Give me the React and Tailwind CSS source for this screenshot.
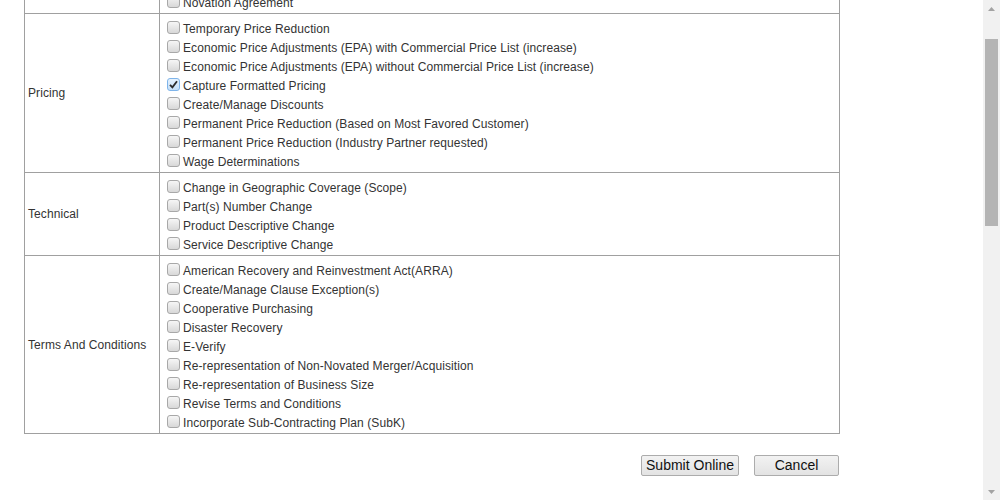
import React from "react";

const rows = [
  {
    label: "Administrative",
    items: [
      "Address Change",
      "Authorized Negotiator Change",
      "Contract Administrator Change",
      "Change of Ownership",
      "Name Change",
      "Mass Modification",
      "Novation Agreement",
    ],
  },
  {
    label: "Pricing",
    items: [
      "Temporary Price Reduction",
      "Economic Price Adjustments (EPA) with Commercial Price List (increase)",
      "Economic Price Adjustments (EPA) without Commercial Price List (increase)",
      "Capture Formatted Pricing",
      "Create/Manage Discounts",
      "Permanent Price Reduction (Based on Most Favored Customer)",
      "Permanent Price Reduction (Industry Partner requested)",
      "Wage Determinations",
    ],
    checked: "Capture Formatted Pricing",
  },
  {
    label: "Technical",
    items: [
      "Change in Geographic Coverage (Scope)",
      "Part(s) Number Change",
      "Product Descriptive Change",
      "Service Descriptive Change",
    ],
  },
  {
    label: "Terms And Conditions",
    items: [
      "American Recovery and Reinvestment Act(ARRA)",
      "Create/Manage Clause Exception(s)",
      "Cooperative Purchasing",
      "Disaster Recovery",
      "E-Verify",
      "Re-representation of Non-Novated Merger/Acquisition",
      "Re-representation of Business Size",
      "Revise Terms and Conditions",
      "Incorporate Sub-Contracting Plan (SubK)",
    ],
  },
];

function Box({ checked }) {
  return (
    <span
      className={
        "mt-[1px] ml-[4px] mr-[3px] flex h-[13px] w-[13px] shrink-0 items-center justify-center rounded-[3px] border " +
        (checked
          ? "border-[#7eb4ea] bg-gradient-to-b from-[#e6f2fd] to-[#c4def7]"
          : "border-[#a8a8a8] bg-gradient-to-b from-[#f6f6f6] to-[#d8d8d8]")
      }
    >
      {checked && (
        <svg width="9" height="9" viewBox="0 0 9 9">
          <path d="M1 4.8 L3.4 7.4 L8 1.2" fill="none" stroke="#2a2a2a" strokeWidth="1.8" />
        </svg>
      )}
    </span>
  );
}

export default function App() {
  return (
    <div
      className="flex h-[500px] w-[1000px] overflow-hidden bg-white text-[12px] text-[#333]"
      style={{ fontFamily: '"Liberation Sans", Arial, sans-serif' }}
    >
      <div className="flex-1 pl-[24px]">
        <div className="-mt-[127px] w-[816px] border-t border-[#a0a0a0]">
          {rows.map((r) => (
            <div key={r.label} className="flex border-x border-b border-[#a0a0a0]">
              <div className="flex w-[135px] shrink-0 items-center border-r border-[#a0a0a0] pl-[3px] tracking-[0.08px]">
                {r.label}
              </div>
              <div className="flex-1 pl-[3px] pt-[6px]">
                {r.items.map((it) => (
                  <div key={it} className="flex h-[19px] items-start leading-[19px]">
                    <Box checked={r.checked === it} />
                    <span className="whitespace-nowrap tracking-[0.085px]">{it}</span>
                  </div>
                ))}
              </div>
            </div>
          ))}
        </div>
        <div className="mt-[21px] flex w-[816px] justify-end gap-[15px] pr-px">
          <button className="h-[21px] w-[98px] rounded-[2px] border border-[#acacac] bg-gradient-to-b from-[#f2f2f2] to-[#e3e3e3] text-[14px] leading-[19px] text-[#111]">
            Submit Online
          </button>
          <button className="h-[21px] w-[85px] rounded-[2px] border border-[#acacac] bg-gradient-to-b from-[#f2f2f2] to-[#e3e3e3] text-[14px] leading-[19px] text-[#111]">
            Cancel
          </button>
        </div>
      </div>
      <div className="flex h-[500px] w-[17px] shrink-0 flex-col bg-[#f1f1f1]">
        <div className="flex h-[17px] items-center justify-center">
          <svg width="7" height="4" viewBox="0 0 7 4">
            <path d="M0 4 L3.5 0 L7 4 Z" fill="#a3a3a3" />
          </svg>
        </div>
        <div className="h-[22px]" />
        <div className="mx-[2px] h-[187px] bg-[#b4b4b4]" />
        <div className="flex-1" />
        <div className="flex h-[17px] items-center justify-center">
          <svg width="7" height="4" viewBox="0 0 7 4">
            <path d="M0 0 L3.5 4 L7 0 Z" fill="#a3a3a3" />
          </svg>
        </div>
      </div>
    </div>
  );
}
